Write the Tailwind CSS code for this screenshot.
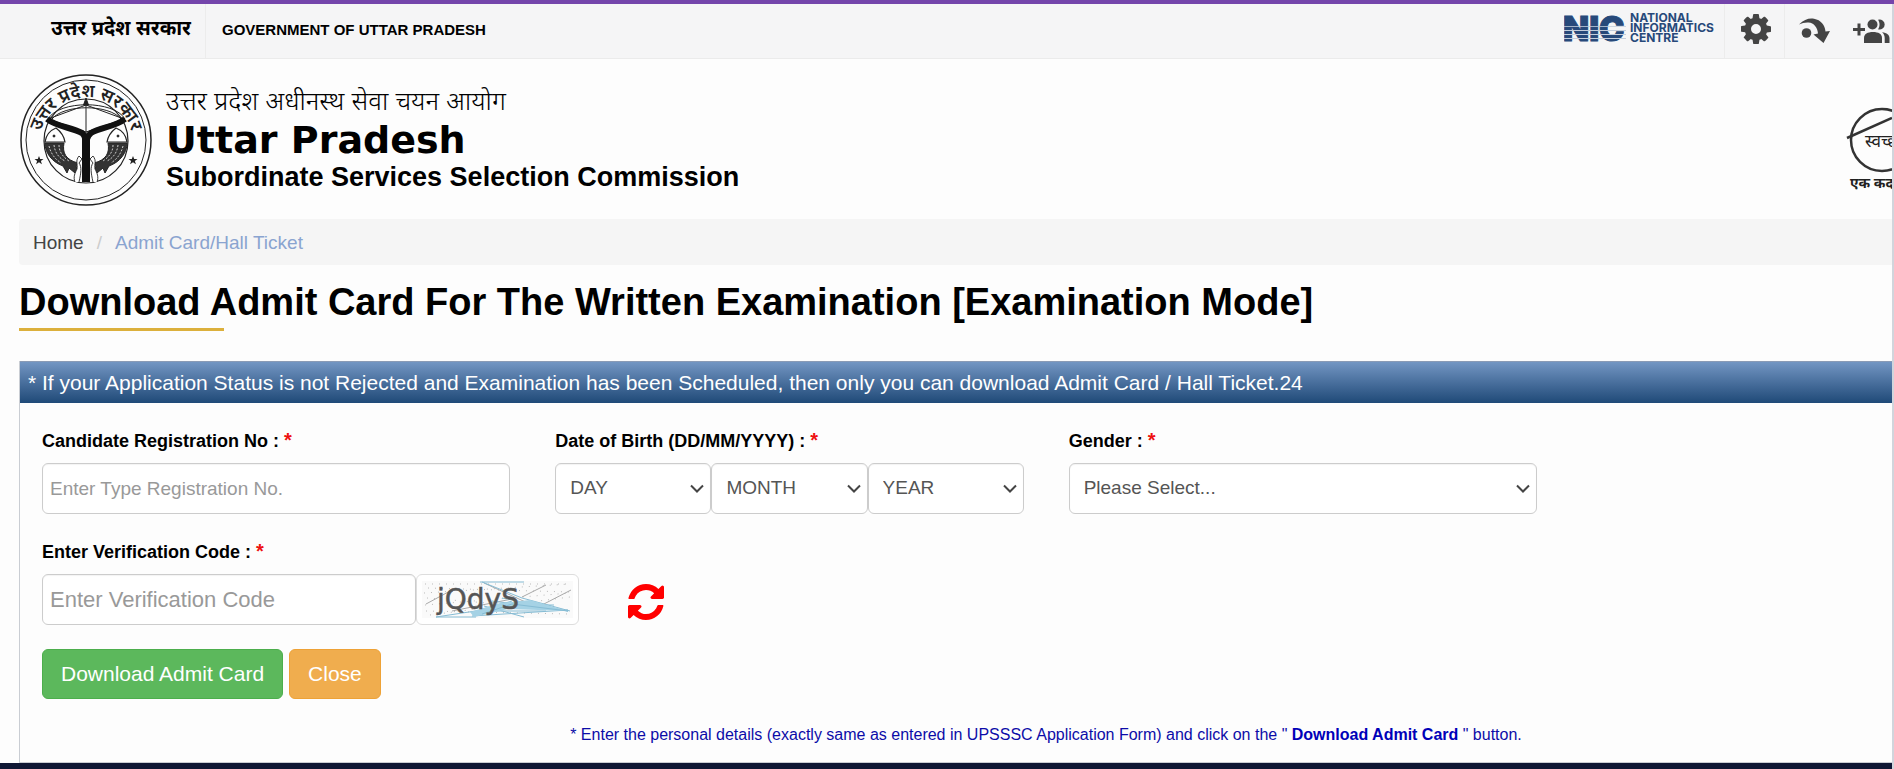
<!DOCTYPE html>
<html lang="en">
<head>
    <meta charset="UTF-8" />
    <meta name="viewport" content="width=device-width, initial-scale=1" />
    <title>UPSSSC - Download Admit Card</title>
    <script src="https://cdn.jsdelivr.net/npm/@tailwindcss/browser@4"></script>
</head>
<body class="min-h-screen flex flex-col bg-[#fdfdfd] text-black font-['Liberation_Sans','Noto_Sans',sans-serif] overflow-x-hidden">

    <div class="h-1 bg-[#7445ab]"></div>

    <div class="flex-1 flex flex-col border-r-2 border-gray-300">

        <!-- Top bar -->
        <div class="flex justify-between h-[55px] bg-[#f5f5f6] border-b border-[#ebebeb] overflow-hidden">
            <div class="flex">
                <a href="#" lang="hi" class="w-[206px] pl-[51px] pt-3 text-[20px] leading-6 font-bold border-r border-[#ececec] whitespace-nowrap">उत्तर प्रदेश सरकार</a>
                <a href="#" class="pl-4 pt-[14px] text-[15px] leading-6 font-bold whitespace-nowrap">GOVERNMENT OF UTTAR PRADESH</a>
            </div>
            <div class="flex">
                <a href="#" class="w-[160px] pt-[9px]" aria-label="National Informatics Centre">
                    <svg width="156" height="34" viewBox="0 0 156 34" fill="#27497a">
                        <text x="-1" y="28" font-family="Inter, sans-serif" font-weight="900" font-size="34" stroke="#27497a" stroke-width="1">NIC</text>
                        <g stroke="#c3cddb">
                            <path d="M0 13.500h62" stroke-width=".8" />
                            <path d="M0 17.500h62" stroke-width="1" />
                            <path d="M0 21.500h62" stroke-width="1.200" />
                            <path d="M0 25.500h62" stroke-width="1.200" />
                        </g>
                        <g font-family="Inter, sans-serif" font-weight="700" font-size="12">
                            <text x="66" y="9">NATIONAL</text>
                            <text x="66" y="19">INFORMATICS</text>
                            <text x="66" y="29">CENTRE</text>
                        </g>
                    </svg>
                </a>
                <button type="button" class="w-[60px] flex justify-center pl-[2px] pt-[10px] border-l border-[#ececec]" aria-label="Settings">
                    <svg width="30" height="30" viewBox="0 0 1536 1536" fill="#444"><path d="M1024 768q0-106-75-181t-181-75-181 75-75 181 75 181 181 75 181-75 75-181zm512-109v222q0 12-8 23t-20 13l-185 28q-19 54-39 91 35 50 107 138 10 12 10 25t-9 23q-27 37-99 108t-94 71q-12 0-26-9l-138-108q-44 23-91 38-16 136-29 186-7 28-36 28h-222q-14 0-24.500-8.500t-11.500-21.500l-28-184q-49-16-90-37l-141 107q-10 9-25 9-14 0-25-11-126-114-165-168-7-10-7-23 0-12 8-23 15-21 51-66.500t54-70.500q-27-50-41-99l-183-27q-13-2-21-12.500t-8-23.500v-222q0-12 8-23t19-13l186-28q14-46 39-92-40-57-107-138-10-12-10-24 0-10 9-23 26-36 98.500-107.500t94.500-71.500q13 0 26 10l138 107q44-23 91-38 16-136 29-186 7-28 36-28h222q14 0 24.500 8.500t11.500 21.500l28 184q49 16 90 37l142-107q9-9 24-9 13 0 25 10 129 119 165 170 7 8 7 22 0 12-8 23-15 21-51 66.500t-54 70.500q26 50 41 98l183 28q13 2 21 12.500t8 23.500z" /></svg>
                </button>
                <a href="#main" class="w-[60px] flex justify-center pt-[14px] border-l border-[#ececec]" aria-label="Skip to main content">
                    <svg width="32" height="26" viewBox="0 0 32 26" fill="#444">
                        <circle cx="7.500" cy="15" r="4.800" />
                        <path d="M0 6.500C5 1.500 10 0 15 .8c7 1.200 11 6.500 11.500 12.700l4.500-.5-6.500 12-10-8.500 4.500-1C18.500 9.500 15 5 9.500 4.500 6 4.300 3 5 0 6.500z" />
                    </svg>
                </a>
                <a href="#" class="w-[48px] pl-[9px] pt-[14px] overflow-hidden" aria-label="Social media">
                    <svg width="38" height="26" viewBox="0 0 38 26" fill="#444">
                        <path d="M4.500 5.500h3v4.500h4.500v3H7.500v4.500h-3V13H0v-3h4.500z" />
                        <circle cx="19.500" cy="6.500" r="5" />
                        <path d="M11 25v-5c0-4 3.500-6 9-6s9 2 9 6v5z" />
                        <path d="M25 1.800a5 5 0 1 1 0 9.400c2-2.700 2-6.700 0-9.400z" />
                        <path d="M29 14.200c5 .5 7.500 2.500 7.500 6V25h-4.800v-5c0-2.500-1-4.500-2.700-5.800z" />
                    </svg>
                </a>
            </div>
        </div>

        <!-- Department header -->
        <header class="flex items-start justify-between h-[160px] pt-[14px] pl-[19px]">
            <div class="flex gap-[13px]">
                <svg width="134" height="134" viewBox="0 0 134 134" fill="none" stroke="#222" role="img" aria-label="Uttar Pradesh emblem">
                    <defs>
                        <path id="arc" d="M20 71a47 47 0 0 1 94 0" />
                    </defs>
                    <circle cx="67" cy="67" r="65" stroke-width="1.500" />
                    <circle cx="67" cy="67" r="60" stroke-width="1" />
                    <circle cx="67" cy="68" r="42" stroke-width="1.200" />
                    <text fill="#222" stroke="none" font-family="'Noto Sans', sans-serif" font-weight="600" font-size="18" text-anchor="middle"><textPath href="#arc" startOffset="50%">उत्तर प्रदेश सरकार</textPath></text>
                    <!-- bow and arrow -->
                    <path d="M29 46C40 27 95 27 106 46M33 46C45 31 90 31 102 46M29 46l38-14 38 14M29 46l38 13 38-13M67 28v32" stroke-width="1" />
                    <path d="M67 25l-2.500 7h5z" fill="#222" />
                    <!-- confluence -->
                    <path d="M28 46c10 8 24 8 35 14 4 3 4 8 4 14v35M106 46c-10 8-24 8-34 14-4 3-5 8-5 14" stroke="#111" stroke-width="6" />
                    <path d="M67 66v43" stroke="#111" stroke-width="8" />
                    <!-- fishes -->
                    <g>
                        <path d="M26 69c1-7 6-12 11-14 4 3 8 8 9 14z" fill="#fff" stroke-width="1.200" />
                        <circle cx="35" cy="63" r="1" fill="#222" />
                        <path d="M26 70h19c-2 10 2 17 14 20l-2 4c3 3 1 5-1 6l-6-5-2 5-4-7C33 89 26 80 26 70z" fill="#333" />
                        <path d="M30 73c2 8 6 13 12 17M35 72c1 8 5 13 11 16M40 72c0 7 4 12 10 16" stroke="#ddd" stroke-width=".9" stroke-dasharray="2 1.500" />
                        <path d="M56 109c-2-5 0-9 2-13 1-5-2-8 2-13l3 3-3 4c3 4 2 10 0 19" fill="#fff" stroke-width=".9" />
                    </g>
                    <g transform="matrix(-1 0 0 1 134 0)">
                        <path d="M26 69c1-7 6-12 11-14 4 3 8 8 9 14z" fill="#fff" stroke-width="1.200" />
                        <circle cx="35" cy="63" r="1" fill="#222" />
                        <path d="M26 70h19c-2 10 2 17 14 20l-2 4c3 3 1 5-1 6l-6-5-2 5-4-7C33 89 26 80 26 70z" fill="#333" />
                        <path d="M30 73c2 8 6 13 12 17M35 72c1 8 5 13 11 16M40 72c0 7 4 12 10 16" stroke="#ddd" stroke-width=".9" stroke-dasharray="2 1.500" />
                        <path d="M56 109c-2-5 0-9 2-13 1-5-2-8 2-13l3 3-3 4c3 4 2 10 0 19" fill="#fff" stroke-width=".9" />
                    </g>
                    <g fill="#222" stroke="none">
                        <path d="M20 83l1.200 3h3.300l-2.600 2 1 3.200-2.900-1.900-2.900 1.900 1-3.200-2.600-2h3.300z" />
                        <path d="M114 83l1.200 3h3.300l-2.600 2 1 3.200-2.900-1.900-2.900 1.900 1-3.200-2.600-2h3.300z" />
                    </g>
                </svg>
                <div class="pt-[10px] whitespace-nowrap">
                    <p lang="hi" class="text-[26px] leading-9 font-light">उत्तर प्रदेश अधीनस्थ सेवा चयन आयोग</p>
                    <p class="text-[38px] leading-[42px] font-black font-['Arial_Black','DejaVu_Sans',sans-serif]">Uttar Pradesh</p>
                    <p class="text-[27px] leading-8 font-bold">Subordinate Services Selection Commission</p>
                </div>
            </div>
            <a href="#" class="pt-[33px]" aria-label="Swachh Bharat">
                <svg width="46" height="86" viewBox="0 0 46 86" fill="none" stroke="#333">
                    <circle cx="36" cy="34" r="31" stroke-width="2.500" />
                    <path d="M1 32l45-20" stroke-width="2.500" />
                    <g fill="#222" stroke="none" font-family="'Noto Sans', sans-serif">
                        <text x="19" y="41" font-size="17">स्वच्छ</text>
                        <text x="4" y="82" font-size="14" font-weight="700">एक कदम</text>
                    </g>
                </svg>
            </a>
        </header>

        <main id="main" class="flex-1 flex flex-col pl-[19px]">
            <!-- Breadcrumb -->
            <nav class="flex items-center h-[46px] px-[14px] pt-[2px] bg-[#f5f5f5] rounded-l text-[19px]">
                <a href="#" class="text-[#444]">Home</a>
                <span class="px-[13px] text-[#ccc]">/</span>
                <a href="#" class="text-[#8aa4d0]">Admit Card/Hall Ticket</a>
            </nav>

            <h1 class="mt-[15px] text-[38px] leading-[44px] font-bold">Download Admit Card For The Written Examination [Examination Mode]</h1>
            <div class="mt-1 w-[205px] h-[3px] bg-[#dcb03c]"></div>

            <section class="flex-1 mt-[30px] border-l border-b border-[#c9cdd3]">
                <h2 class="h-[42px] pl-2 leading-[42px] text-[21px] text-white border-t border-[#8a9bb5] bg-linear-to-b from-[#7396c3] to-[#1f4a78]">* If your Application Status is not Rejected and Examination has been Scheduled, then only you can download Admit Card / Hall Ticket.24</h2>

                <form class="pl-[22px] pt-[26px] pb-[15px] w-full max-w-[1517px] text-[19px] text-[#555]">
                    <div class="grid grid-cols-3 gap-x-[45px] gap-y-[26px]">
                        <div>
                            <label for="regNo" class="block mb-[10px] text-lg leading-6 font-bold text-black">Candidate Registration No : <span class="text-xl leading-none text-[#e11]">*</span></label>
                            <input id="regNo" type="text" placeholder="Enter Type Registration No." class="block w-full h-[51px] px-[7px] bg-white border border-[#ccc] rounded-md inset-shadow-xs placeholder-[#999]" />
                        </div>
                        <fieldset>
                            <legend class="block mb-[10px] text-lg leading-6 font-bold text-black">Date of Birth (DD/MM/YYYY) : <span class="text-xl leading-none text-[#e11]">*</span></legend>
                            <div class="grid grid-cols-3">
                                <div class="relative">
                                    <select aria-label="Day" class="appearance-none block w-full h-[51px] px-[14px] bg-white border border-[#ccc] rounded-md inset-shadow-xs"><option>DAY</option></select>
                                    <svg class="absolute right-[7px] top-[21px] pointer-events-none" width="14" height="10" viewBox="0 0 14 10" fill="none" stroke="#444" stroke-width="2"><path d="M1 1.500l6 6 6-6" /></svg>
                                </div>
                                <div class="relative">
                                    <select aria-label="Month" class="appearance-none block w-full h-[51px] px-[14px] bg-white border border-[#ccc] rounded-md inset-shadow-xs"><option>MONTH</option></select>
                                    <svg class="absolute right-[7px] top-[21px] pointer-events-none" width="14" height="10" viewBox="0 0 14 10" fill="none" stroke="#444" stroke-width="2"><path d="M1 1.500l6 6 6-6" /></svg>
                                </div>
                                <div class="relative">
                                    <select aria-label="Year" class="appearance-none block w-full h-[51px] px-[14px] bg-white border border-[#ccc] rounded-md inset-shadow-xs"><option>YEAR</option></select>
                                    <svg class="absolute right-[7px] top-[21px] pointer-events-none" width="14" height="10" viewBox="0 0 14 10" fill="none" stroke="#444" stroke-width="2"><path d="M1 1.500l6 6 6-6" /></svg>
                                </div>
                            </div>
                        </fieldset>
                        <div>
                            <label for="gender" class="block mb-[10px] text-lg leading-6 font-bold text-black">Gender : <span class="text-xl leading-none text-[#e11]">*</span></label>
                            <div class="relative">
                                <select id="gender" class="appearance-none block w-full h-[51px] px-[14px] bg-white border border-[#ccc] rounded-md inset-shadow-xs"><option>Please Select...</option></select>
                                <svg class="absolute right-[7px] top-[21px] pointer-events-none" width="14" height="10" viewBox="0 0 14 10" fill="none" stroke="#444" stroke-width="2"><path d="M1 1.500l6 6 6-6" /></svg>
                            </div>
                        </div>

                        <div class="col-span-3">
                            <label for="captcha" class="block mb-[10px] text-lg leading-6 font-bold text-black">Enter Verification Code : <span class="text-xl leading-none text-[#e11]">*</span></label>
                            <div class="flex items-center">
                                <input id="captcha" type="text" placeholder="Enter Verification Code" class="w-[374px] h-[51px] px-[7px] text-[22px] bg-white border border-[#ccc] rounded-md inset-shadow-xs placeholder-[#999]" />
                                <div class="w-[163px] h-[51px] px-[5px] py-[6px] bg-white border border-[#ddd] rounded-md">
                                    <svg width="151" height="37" viewBox="0 0 151 37" fill="none" role="img" aria-label="Captcha image">
                                        <rect width="151" height="37" fill="#fafafa" />
                                        <g stroke="#bbb" stroke-width="1" stroke-dasharray="1 6">
                                            <path d="M3 3h146M6 7l142 4M2 12l146-9M5 17l144 12M3 24l145-12M4 30l143 3M8 34l140-18" />
                                        </g>
                                        <g stroke="#a9a9a9" stroke-width="1">
                                            <path d="M4 23l26-14M62 2l48 22M120 24l29-15M100 16l24-12M30 30l60-12" />
                                        </g>
                                        <g stroke="#86bcd4" stroke-width="1">
                                            <path d="M58 1h44M60 1l40 16 48 13M14 36l66-10M80 17l66 13M50 35l96-6M90 20l-40 12M102 36L62 25M70 20l76 10M84 24h48M64 30h60M14 36h40" />
                                            <path d="M48 31l30-9 30-3 38 11-60-2-34 8z" fill="#a5d2e5" stroke="none" />
                                            <path d="M60 33l30-10 56 7" />
                                        </g>
                                        <text x="15" y="28" fill="#555" stroke="#555" stroke-width=".5" font-family="'DejaVu Sans', sans-serif" font-size="28">jQdyS</text>
                                    </svg>
                                </div>
                                <button type="button" class="ml-[49px] mt-1" aria-label="Refresh code">
                                    <svg width="36" height="36" viewBox="0 0 1536 1536" fill="#f00"><path d="M1511 928q0 5-1 7-64 268-268 434.500t-478 166.500q-146 0-282.500-55t-243.500-157l-129 129q-19 19-45 19t-45-19-19-45v-448q0-26 19-45t45-19h448q26 0 45 19t19 45-19 45l-137 137q71 66 161 102t187 36q134 0 250-65t186-179q11-17 53-117 8-23 30-23h192q13 0 22.500 9.500t9.500 22.500zm25-800v448q0 26-19 45t-45 19h-448q-26 0-45-19t-19-45 19-45l138-138q-148-137-349-137-134 0-250 65t-186 179q-11 17-53 117-8 23-30 23h-199q-13 0-22.500-9.500t-9.500-22.500v-7q65-268 270-434.500t480-166.500q146 0 284 55.500t245 156.500l130-129q19-19 45-19t45 19 19 45z" /></svg>
                                </button>
                            </div>
                        </div>
                    </div>

                    <div class="flex gap-[6px] mt-6 text-[21px] text-white">
                        <button type="submit" class="h-[50px] px-[18px] bg-[#5cb85c] border border-[#4cae4c] rounded-md">Download Admit Card</button>
                        <button type="button" class="h-[50px] px-[18px] bg-[#f0ad4e] border border-[#eea236] rounded-md">Close</button>
                    </div>

                    <p class="mt-6 pl-[513px] text-center text-base leading-6 text-[#0c0ca8]">* Enter the personal details (exactly same as entered in UPSSSC Application Form) and click on the " <b class="text-[#0000b8]">Download Admit Card</b> " button.</p>
                </form>
            </section>
        </main>

        <footer class="h-[6px] bg-[#0f1734]"></footer>
    </div>
</body>
</html>
